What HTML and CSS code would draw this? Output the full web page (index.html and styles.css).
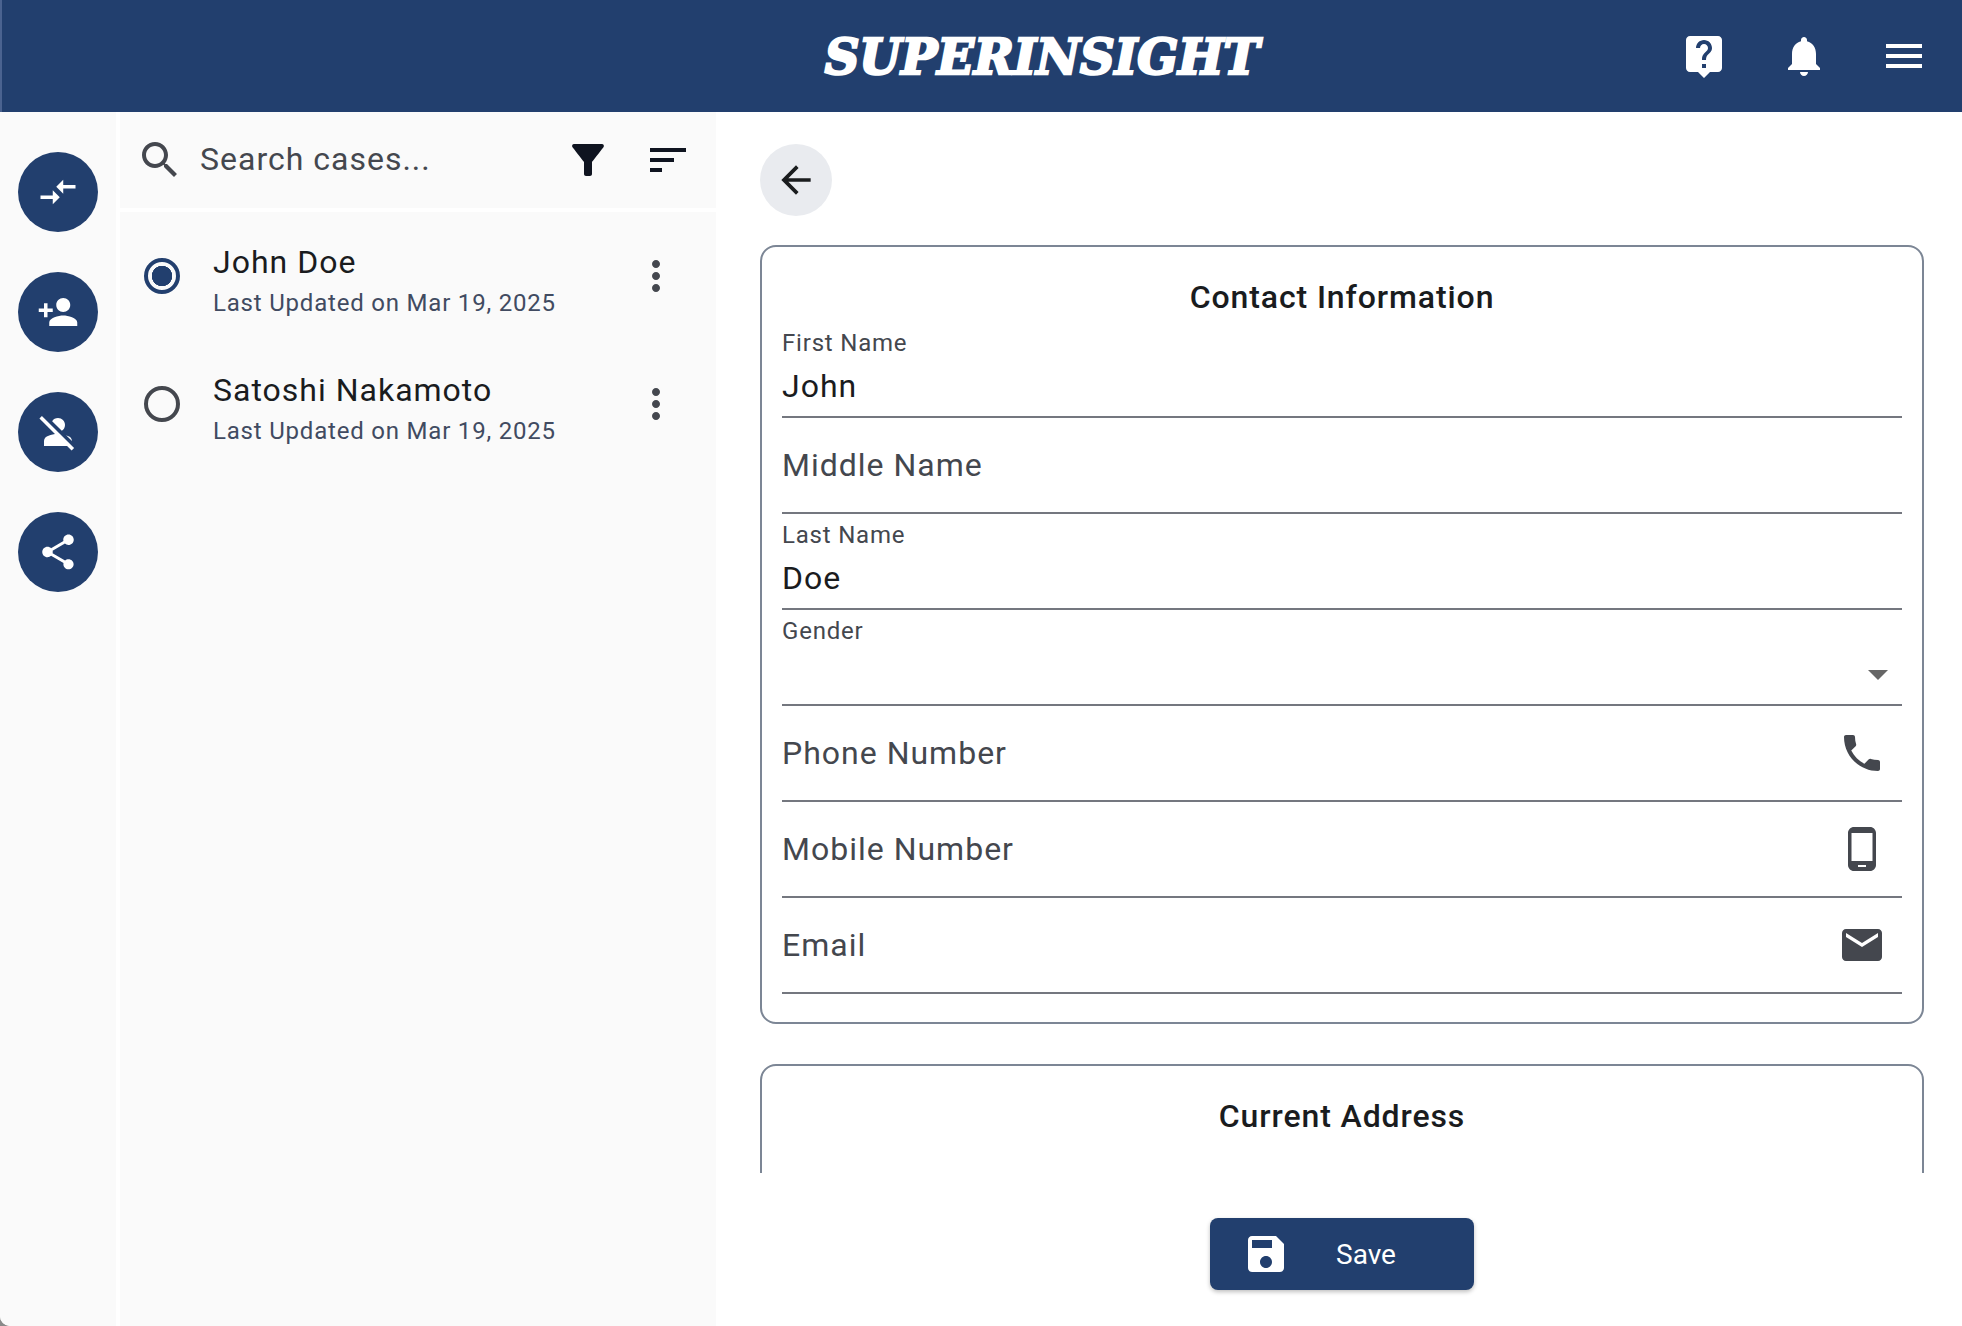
FILE: index.html
```html
<!DOCTYPE html>
<html lang="en">
<head>
    <meta charset="UTF-8">
    <meta name="viewport" content="width=device-width, initial-scale=1.0">
    <title>Superinsight</title>
    <link rel="stylesheet" href="styles.css">
</head>
<body>

<div class="app">
    <header class="topbar">
        <div class="logo">SUPERINSIGHT</div>
        <div class="topbar-icons">
            <svg class="icon" viewBox="0 0 24 24"><path d="M19 2H5c-1.11 0-2 .9-2 2v14c0 1.1.89 2 2 2h4l3 3 3-3h4c1.1 0 2-.9 2-2V4c0-1.1-.9-2-2-2zm-6 16h-2v-2h2v2zm2.07-7.75l-.9.92C13.45 11.9 13 12.5 13 14h-2v-.5c0-1.1.45-2.1 1.17-2.83l1.24-1.26c.37-.36.59-.86.59-1.41 0-1.1-.9-2-2-2s-2 .9-2 2H8c0-2.21 1.79-4 4-4s4 1.79 4 4c0 .88-.36 1.68-.93 2.25z"/></svg>
            <svg class="icon" viewBox="0 0 24 24"><path d="M12 22c1.1 0 2-.9 2-2h-4c0 1.1.89 2 2 2zm6-6v-5c0-3.07-1.64-5.64-4.5-6.32V4c0-.83-.67-1.5-1.5-1.5s-1.5.67-1.5 1.5v.68C7.63 5.36 6 7.92 6 11v5l-2 2v1h16v-1l-2-2z"/></svg>
            <svg class="icon" viewBox="0 0 24 24"><path d="M3 18h18v-2H3v2zm0-5h18v-2H3v2zm0-7v2h18V6H3z"/></svg>
        </div>
    </header>

    <div class="content">
        <nav class="sidebar">
            <button class="round-btn"><svg viewBox="0 0 24 24"><path d="M9.01 14H2v2h7.01v3L13 15l-3.99-4v3zm5.98-1v-3H22V8h-7.01V5L11 9l3.99 4z"/></svg></button>
            <button class="round-btn"><svg viewBox="0 0 24 24"><path d="M15 12c2.21 0 4-1.79 4-4s-1.79-4-4-4-4 1.79-4 4 1.79 4 4 4zm-9-2V7H4v3H1v2h3v3h2v-3h3v-2H6zm9 4c-2.67 0-8 1.34-8 4v2h16v-2c0-2.66-5.33-4-8-4z"/></svg></button>
            <button class="round-btn"><svg viewBox="0 0 24 24"><path d="M8.65 5.82C9.36 4.72 10.6 4 12 4c2.21 0 4 1.79 4 4 0 1.4-.72 2.64-1.82 3.35L8.65 5.82zM20 17.17c-.02-1.1-.63-2.11-1.61-2.62-.54-.28-1.13-.54-1.77-.76L20 17.17zm1.19 4.02L2.81 2.81 1.39 4.22l8.89 8.89c-1.81.23-3.39.79-4.67 1.45C4.61 15.07 4 16.1 4 17.22V20h13.17l2.61 2.61 1.41-1.42z"/></svg></button>
            <button class="round-btn"><svg viewBox="0 0 24 24"><path d="M18 16.08c-.76 0-1.44.3-1.96.77L8.91 12.7c.05-.23.09-.46.09-.7s-.04-.47-.09-.7l7.05-4.11c.54.5 1.25.81 2.04.81 1.66 0 3-1.34 3-3s-1.34-3-3-3-3 1.34-3 3c0 .24.04.47.09.7L8.04 9.81C7.5 9.31 6.79 9 6 9c-1.66 0-3 1.34-3 3s1.34 3 3 3c.79 0 1.5-.31 2.04-.81l7.12 4.16c-.05.21-.08.43-.08.65 0 1.61 1.31 2.92 2.92 2.92 1.61 0 2.92-1.31 2.92-2.92s-1.31-2.92-2.92-2.92z"/></svg></button>
        </nav>

        <aside class="cases">
            <div class="search-bar">
                <svg class="icon icon-muted" viewBox="0 0 24 24"><path d="M15.5 14h-.79l-.28-.27C15.41 12.59 16 11.11 16 9.5 16 5.91 13.09 3 9.5 3S3 5.91 3 9.5 5.91 16 9.5 16c1.61 0 3.09-.59 4.23-1.57l.27.28v.79l5 4.99L20.49 19l-4.99-5zm-6 0C7.01 14 5 11.99 5 9.5S7.01 5 9.5 5 14 7.01 14 9.5 11.99 14 9.5 14z"/></svg>
                <span class="search-text">Search cases...</span>
                <svg class="icon icon-dark" viewBox="0 0 24 24"><path d="M4.25 5.61C6.27 8.2 10 13 10 13v6c0 .55.45 1 1 1h2c.55 0 1-.45 1-1v-6s3.72-4.8 5.74-7.39c.51-.66.04-1.61-.79-1.61H5.04c-.83 0-1.3.95-.79 1.61z"/></svg>
                <svg class="icon icon-dark" viewBox="0 0 24 24"><path d="M3 18h6v-2H3v2zM3 6v2h18V6H3zm0 7h12v-2H3v2z"/></svg>
            </div>

            <ul class="case-list">
                <li class="case-row">
                    <span class="radio radio-on"></span>
                    <div class="case-text">
                        <div class="case-name">John Doe</div>
                        <div class="case-date">Last Updated on Mar 19, 2025</div>
                    </div>
                    <svg class="icon icon-muted" viewBox="0 0 24 24"><path d="M12 8c1.1 0 2-.9 2-2s-.9-2-2-2-2 .9-2 2 .9 2 2 2zm0 2c-1.1 0-2 .9-2 2s.9 2 2 2 2-.9 2-2-.9-2-2-2zm0 6c-1.1 0-2 .9-2 2s.9 2 2 2 2-.9 2-2-.9-2-2-2z"/></svg>
                </li>
                <li class="case-row">
                    <span class="radio"></span>
                    <div class="case-text">
                        <div class="case-name">Satoshi Nakamoto</div>
                        <div class="case-date">Last Updated on Mar 19, 2025</div>
                    </div>
                    <svg class="icon icon-muted" viewBox="0 0 24 24"><path d="M12 8c1.1 0 2-.9 2-2s-.9-2-2-2-2 .9-2 2 .9 2 2 2zm0 2c-1.1 0-2 .9-2 2s.9 2 2 2 2-.9 2-2-.9-2-2-2zm0 6c-1.1 0-2 .9-2 2s.9 2 2 2 2-.9 2-2-.9-2-2-2z"/></svg>
                </li>
            </ul>
        </aside>

        <main class="detail">
            <div class="detail-scroll">
                <button class="back-btn">
                    <svg viewBox="0 0 24 24"><path d="M20 11H7.83l5.59-5.59L12 4l-8 8 8 8 1.41-1.41L7.83 13H20v-2z"/></svg>
                </button>

                <section class="card">
                    <h3 class="card-title">Contact Information</h3>
                    <div class="field filled">
                        <div class="field-body">
                            <div class="field-label">First Name</div>
                            <div class="field-value">John</div>
                        </div>
                    </div>
                    <div class="field">
                        <div class="field-body">Middle Name</div>
                    </div>
                    <div class="field filled">
                        <div class="field-body">
                            <div class="field-label">Last Name</div>
                            <div class="field-value">Doe</div>
                        </div>
                    </div>
                    <div class="field filled">
                        <div class="field-body">
                            <div class="field-label">Gender</div>
                        </div>
                        <span class="dropdown-arrow"></span>
                    </div>
                    <div class="field">
                        <div class="field-body">Phone Number</div>
                        <svg class="icon icon-muted" viewBox="0 0 24 24"><path d="M6.62 10.79c1.44 2.83 3.76 5.14 6.59 6.59l2.2-2.2c.27-.27.67-.36 1.02-.24 1.12.37 2.33.57 3.57.57.55 0 1 .45 1 1V20c0 .55-.45 1-1 1-9.39 0-17-7.61-17-17 0-.55.45-1 1-1h3.5c.55 0 1 .45 1 1 0 1.25.2 2.45.57 3.57.11.35.03.74-.25 1.02l-2.2 2.2z"/></svg>
                    </div>
                    <div class="field">
                        <div class="field-body">Mobile Number</div>
                        <svg class="icon icon-muted" viewBox="0 0 24 24"><path d="M16 1H8C6.34 1 5 2.34 5 4v16c0 1.66 1.34 3 3 3h8c1.66 0 3-1.34 3-3V4c0-1.66-1.34-3-3-3zm-2 20h-4v-1h4v1zm3.25-3H6.75V4h10.5v14z"/></svg>
                    </div>
                    <div class="field">
                        <div class="field-body">Email</div>
                        <svg class="icon icon-muted" viewBox="0 0 24 24"><path d="M20 4H4c-1.1 0-1.99.9-1.99 2L2 18c0 1.1.9 2 2 2h16c1.1 0 2-.9 2-2V6c0-1.1-.9-2-2-2zm0 4l-8 5-8-5V6l8 5 8-5v2z"/></svg>
                    </div>
                </section>

                <section class="card card-cut">
                    <h3 class="card-title">Current Address</h3>
                </section>
            </div>

            <div class="detail-footer">
                <button class="save-btn">
                    <svg viewBox="0 0 24 24"><path d="M17 3H5c-1.11 0-2 .9-2 2v14c0 1.1.89 2 2 2h14c1.1 0 2-.9 2-2V7l-4-4zm-5 16c-1.66 0-3-1.34-3-3s1.34-3 3-3 3 1.34 3 3-1.34 3-3 3zm3-10H5V5h10v4z"/></svg>
                    <span>Save</span>
                </button>
            </div>
        </main>
    </div>
</div>

</body>
</html>
```

FILE: styles.css
```css
* {
    box-sizing: border-box;
}
html, body {
    margin: 0;
    height: 100%;
}
body {
    font-family: Roboto, "Liberation Sans", sans-serif;
    color: #1a1c1e;
    background-color: #8a8a8a;
    overflow: hidden;
}
button {
    border: none;
    padding: 0;
    font-family: inherit;
    cursor: pointer;
}
.app {
    height: 100%;
    display: flex;
    flex-direction: column;
    background-color: #fff;
    border-bottom-left-radius: 10px;
    overflow: hidden;
}
.icon {
    width: 48px;
    height: 48px;
    flex-shrink: 0;
    display: block;
}
.icon-muted {
    fill: #44474e;
}
.icon-dark {
    fill: #0f1420;
}

/* top bar */
.topbar {
    height: 112px;
    flex-shrink: 0;
    padding-left: 120px;
    display: grid;
    align-items: center;
    background-color: #223f6e;
    border-left: 2px solid #4b6390;
}
.logo {
    grid-area: 1 / 1;
    justify-self: center;
    padding-top: 2px;
    font-family: "DejaVu Serif", serif;
    font-weight: 700;
    font-style: italic;
    font-size: 48px;
    letter-spacing: 0;
    color: #fff;
    -webkit-text-stroke: 2.5px #fff;
}
.topbar-icons {
    grid-area: 1 / 1;
    justify-self: end;
    display: flex;
    gap: 52px;
    padding-right: 34px;
    fill: #fff;
}

.content {
    flex: 1;
    display: flex;
    min-height: 0;
}

/* far left buttons */
.sidebar {
    width: 116px;
    margin-right: 4px;
    padding-top: 40px;
    display: flex;
    flex-direction: column;
    align-items: center;
    gap: 40px;
    background-color: #fafafa;
}
.round-btn {
    width: 80px;
    height: 80px;
    border-radius: 50%;
    display: flex;
    align-items: center;
    justify-content: center;
    background-color: #223f6e;
}
.round-btn svg {
    width: 42px;
    height: 42px;
    fill: #fff;
}

/* case list */
.cases {
    width: 596px;
    display: flex;
    flex-direction: column;
    gap: 4px;
}
.search-bar {
    height: 96px;
    padding: 0 24px 0 16px;
    display: flex;
    align-items: center;
    gap: 32px;
    background-color: #fafafa;
}
.search-text {
    flex: 1;
    margin: -3px 0 0 -16px;
    font-size: 32px;
    letter-spacing: 1px;
    color: #44474e;
}
.case-list {
    flex: 1;
    margin: 0;
    padding: 0;
    list-style-type: none;
    background-color: #fafafa;
}
.case-row {
    height: 128px;
    padding: 0 36px 0 24px;
    display: flex;
    align-items: center;
}
.radio {
    width: 36px;
    height: 36px;
    flex-shrink: 0;
    margin-right: 33px;
    border: 4px solid #44474e;
    border-radius: 50%;
}
.radio-on {
    border-color: #223f6e;
    background: radial-gradient(circle, #223f6e 10px, transparent 10.5px);
}
.case-text {
    flex: 1;
    margin-top: 11px;
}
.case-name {
    font-size: 32px;
    line-height: 38px;
    letter-spacing: 1px;
}
.case-date {
    margin-top: 5px;
    font-size: 24px;
    line-height: 34px;
    letter-spacing: 0.8px;
    color: #414b61;
}

/* detail */
.detail {
    flex: 1;
    min-width: 0;
    display: flex;
    flex-direction: column;
    padding: 32px 38px 36px 44px;
}
.detail-scroll {
    flex: 1;
    min-height: 0;
    overflow: hidden;
}
.back-btn {
    width: 72px;
    height: 72px;
    margin-bottom: 29px;
    border-radius: 50%;
    display: flex;
    align-items: center;
    justify-content: center;
    background-color: #e9ebef;
}
.back-btn svg {
    width: 44px;
    height: 44px;
    fill: #1a1c1e;
}
.card {
    margin-bottom: 40px;
    padding: 0 20px 28px;
    border: 2px solid #7c8695;
    border-radius: 16px;
}
.card-cut {
    height: 400px;
}
.card-title {
    height: 75px;
    margin: 0;
    padding-top: 28px;
    text-align: center;
    font-size: 32px;
    line-height: 44px;
    font-weight: 500;
    letter-spacing: 0.9px;
}
.field {
    height: 96px;
    display: flex;
    align-items: center;
    padding-right: 16px;
    border-bottom: 2px solid #74777f;
    font-size: 32px;
    letter-spacing: 1px;
    color: #44474e;
}
.field-body {
    flex: 1;
}
.field.filled {
    align-items: flex-start;
    padding-top: 9px;
}
.field-label {
    font-size: 24px;
    line-height: 24px;
    letter-spacing: 0.8px;
}
.field-value {
    margin-top: 9px;
    line-height: 44px;
    color: #1a1c1e;
}
.dropdown-arrow {
    margin: 51px -2px 0 0;
    border-top: 10px solid #666;
    border-left: 10px solid transparent;
    border-right: 10px solid transparent;
}

/* save */
.detail-footer {
    height: 117px;
    flex-shrink: 0;
    padding-top: 45px;
    display: flex;
    justify-content: center;
}
.save-btn {
    width: 264px;
    height: 72px;
    padding-left: 32px;
    display: flex;
    align-items: center;
    gap: 46px;
    border-radius: 8px;
    color: #fff;
    font-size: 28px;
    background-color: #223f6e;
    box-shadow: 0 2px 4px rgba(0, 0, 0, 0.25);
}
.save-btn svg {
    width: 48px;
    height: 48px;
    fill: #fff;
}
```
